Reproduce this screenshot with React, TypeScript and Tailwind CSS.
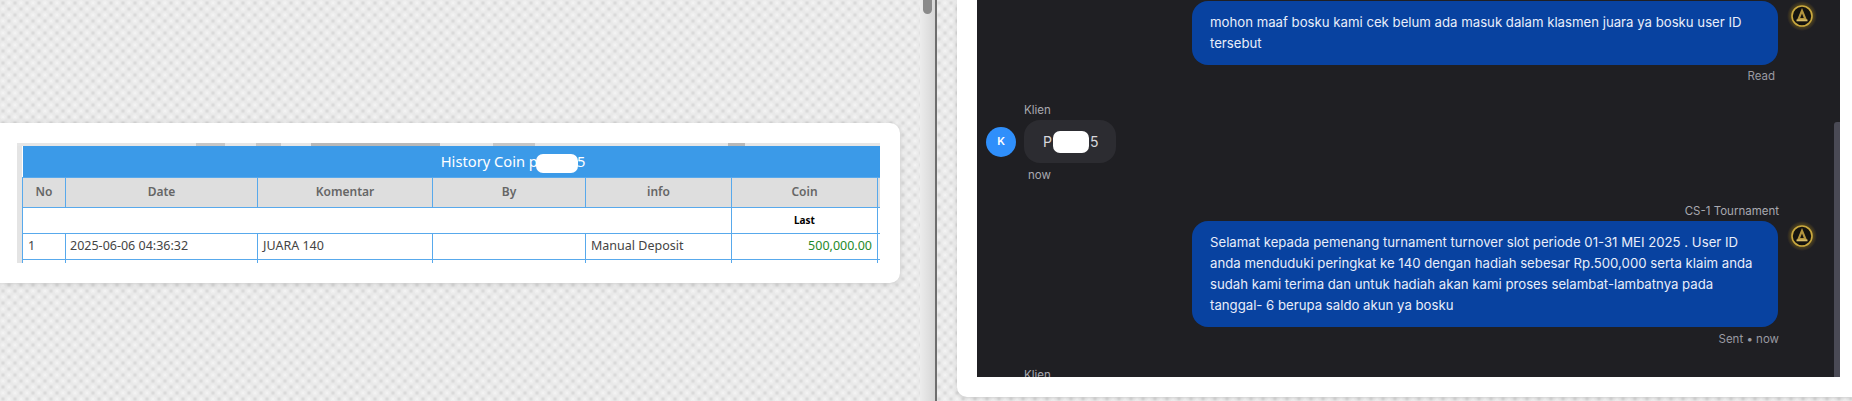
// App.tsx
import React from 'react';

const WINDOW_BG =
  'bg-[#e9e9e9] bg-[radial-gradient(circle_at_3px_3px,#d4d4d4_0,transparent_2.5px),radial-gradient(circle_at_9px_9px,#d4d4d4_0,transparent_2.5px),radial-gradient(circle_at_9px_3px,#f4f4f4_0,transparent_3.5px),radial-gradient(circle_at_3px_9px,#f4f4f4_0,transparent_3.5px)] bg-[length:12px_12px]';

const cellBorder = 'border border-[#58a9ec]';

const GoldAvatar: React.FC = () => (
  <svg viewBox="0 0 30 30" className="h-[30px] w-[30px] shrink-0">
    <defs>
      <radialGradient id="halo">
        <stop offset="0.65" stopColor="#5c4d1c" />
        <stop offset="1" stopColor="#201f24" />
      </radialGradient>
    </defs>
    <circle cx="15" cy="15" r="15" fill="url(#halo)" />
    <circle cx="15" cy="15" r="10" fill="#14130f" stroke="#c9a83f" strokeWidth="1.6" />
    <path d="M15 7 L20 19 H10 Z" fill="#b3953f" />
    <path d="M15 12.5 L16.8 17 H13.2 Z" fill="#14130f" />
    <rect x="9.5" y="18.5" width="11" height="1.8" fill="#d8bd68" />
  </svg>
);

const HistoryTable: React.FC = () => (
  <div className="h-[120px] w-[863px] overflow-hidden bg-[#e4e4e4] font-['Noto_Sans','Open_Sans',sans-serif]">
    <div className="flex h-[3px] bg-[#e6e6e6]">
      <div className="ml-[179px] w-[29px] bg-[#c6c6c6]" />
      <div className="ml-[31px] w-[25px] bg-[#c6c6c6]" />
      <div className="ml-[30px] w-[129px] bg-[#b8b8b8]" />
      <div className="ml-[53px] w-[42px] bg-[#c6c6c6]" />
      <div className="ml-[193px] w-[17px] bg-[#b8b8b8]" />
    </div>
    <table className="ml-[5px] w-[858px] table-fixed border-collapse bg-white text-[12.5px] text-[#555]">
      <colgroup>
        <col className="w-[43px]" />
        <col className="w-[192px]" />
        <col className="w-[175px]" />
        <col className="w-[153px]" />
        <col className="w-[146px]" />
        <col className="w-[146px]" />
        <col className="w-[3px]" />
      </colgroup>
      <thead>
        <tr className="h-[31px] bg-[#3b9ae8]">
          <th colSpan={7} className="pl-[123px] text-center text-[14.7px] font-normal text-white">
            History Coin p
            <span className="-ml-[2px] -mr-[1px] inline-block h-[19px] w-[42px] rounded-[7px] bg-white align-middle" />
            5
          </th>
        </tr>
        <tr className="h-[30px] bg-[#dedede] text-[12px] text-[#666]">
          <th className={`${cellBorder} font-semibold`}>No</th>
          <th className={`${cellBorder} font-semibold`}>Date</th>
          <th className={`${cellBorder} font-semibold`}>Komentar</th>
          <th className={`${cellBorder} font-semibold`}>By</th>
          <th className={`${cellBorder} font-semibold`}>info</th>
          <th className={`${cellBorder} font-semibold`}>Coin</th>
          <th className={cellBorder} />
        </tr>
      </thead>
      <tbody>
        <tr className="h-[26px]">
          <td colSpan={5} className={cellBorder} />
          <td className={`${cellBorder} text-center text-[10px] font-bold text-black`}>Last</td>
          <td className={cellBorder} />
        </tr>
        <tr className="h-[26px] text-[#444]">
          <td className={`${cellBorder} pl-[5px]`}>1</td>
          <td className={`${cellBorder} pl-[4px]`}>2025-06-06 04:36:32</td>
          <td className={`${cellBorder} pl-[5px]`}>JUARA 140</td>
          <td className={cellBorder} />
          <td className={`${cellBorder} pl-[5px]`}>Manual Deposit</td>
          <td className={`${cellBorder} pr-[5px] text-right text-[#1f8a2a]`}>500,000.00</td>
          <td className={cellBorder} />
        </tr>
        <tr className="h-[26px]">
          <td className={cellBorder} />
          <td className={cellBorder} />
          <td className={cellBorder} />
          <td className={cellBorder} />
          <td className={cellBorder} />
          <td className={cellBorder} />
          <td className={cellBorder} />
        </tr>
      </tbody>
    </table>
  </div>
);

const AgentBubble: React.FC<{ lines: string[] }> = ({ lines }) => (
  <div className="w-[586px] rounded-[16px] bg-[#0842a0] px-[18px] py-[11px] text-[13.2px] leading-[21px] text-[#e8eefb]">
    {lines.map((line) => (
      <div key={line} className="whitespace-nowrap">
        {line}
      </div>
    ))}
  </div>
);

const ChatPanel: React.FC = () => (
  <div className="relative h-[377px] w-[863px] overflow-hidden bg-[#1f1f23] font-['Inter',sans-serif]">
    <div className="pt-[1px]">
      <div className="flex items-start justify-end gap-[9px] pr-[23px]">
        <AgentBubble
          lines={[
            'mohon maaf bosku kami cek belum ada masuk dalam klasmen juara ya bosku user ID',
            'tersebut',
          ]}
        />
        <GoldAvatar />
      </div>
      <div className="mr-[65px] mt-[3px] text-right text-[11.5px] leading-[16px] text-[#9a9aa2]">Read</div>

      <div className="ml-[47px] mt-[18px] text-[11.5px] leading-[16px] text-[#a9a9b0]">Klien</div>
      <div className="ml-[9px] mt-[2px] flex items-center gap-[8px]">
        <div className="flex h-[30px] w-[30px] items-center justify-center rounded-full bg-[#2f8ffb] text-[11px] font-semibold text-white">
          K
        </div>
        <div className="flex h-[43px] w-[92px] items-center rounded-[16px] bg-[#2c2c31] pl-[19px] text-[14px] text-[#d8d8dc]">
          P
          <span className="ml-[1px] mr-[1px] inline-block h-[22px] w-[36px] rounded-[7px] bg-white" />
          5
        </div>
      </div>
      <div className="ml-[51px] mt-[4px] text-[11.5px] leading-[16px] text-[#a9a9b0]">now</div>

      <div className="mr-[61px] mt-[20px] text-right text-[11.5px] leading-[16px] text-[#a9a9b0]">CS-1 Tournament</div>
      <div className="mt-[2px] flex items-start justify-end gap-[9px] pr-[23px]">
        <AgentBubble
          lines={[
            'Selamat kepada pemenang turnament turnover slot periode 01-31 MEI 2025 . User ID',
            'anda menduduki peringkat ke 140 dengan hadiah sebesar Rp.500,000 serta klaim anda',
            'sudah kami terima dan untuk hadiah akan kami proses selambat-lambatnya pada',
            'tanggal- 6 berupa saldo akun ya bosku',
          ]}
        />
        <GoldAvatar />
      </div>
      <div className="mr-[61px] mt-[4px] text-right text-[11.5px] leading-[16px] text-[#9a9aa2]">Sent • now</div>
      <div className="ml-[47px] mt-[20px] text-[11.5px] leading-[16px] text-[#a9a9b0]">Klien</div>
    </div>
    {/* scrollbar thumb over the chat */}
    <div className="absolute bottom-0 right-0 top-[122px] w-[6px] rounded-tl-[3px] bg-[#4a4a55]" />
  </div>
);

const App: React.FC = () => {
  return (
    <div className={`flex h-[401px] w-[1852px] overflow-hidden ${WINDOW_BG}`}>
      <div className="w-[920px] shrink-0 pt-[123px]">
        <div className="h-[160px] w-[900px] rounded-r-[10px] bg-white pl-[17px] pt-[20px] shadow-[0_1px_6px_rgba(0,0,0,0.15)]">
          <HistoryTable />
        </div>
      </div>

      <div className="h-full w-[17px] shrink-0 border-r-2 border-[#6e6e6e] bg-gradient-to-r from-[#ececec] to-[#d6d6d6]">
        <div className="ml-[3px] h-[14px] w-[9px] rounded-b-[5px] bg-[#8a8a8a]" />
      </div>

      <div className="ml-[20px] h-[397px] w-[895px] shrink-0 rounded-bl-[10px] bg-white pl-[20px] shadow-[0_1px_4px_rgba(0,0,0,0.15)]">
        <ChatPanel />
      </div>
    </div>
  );
};

export default App;
